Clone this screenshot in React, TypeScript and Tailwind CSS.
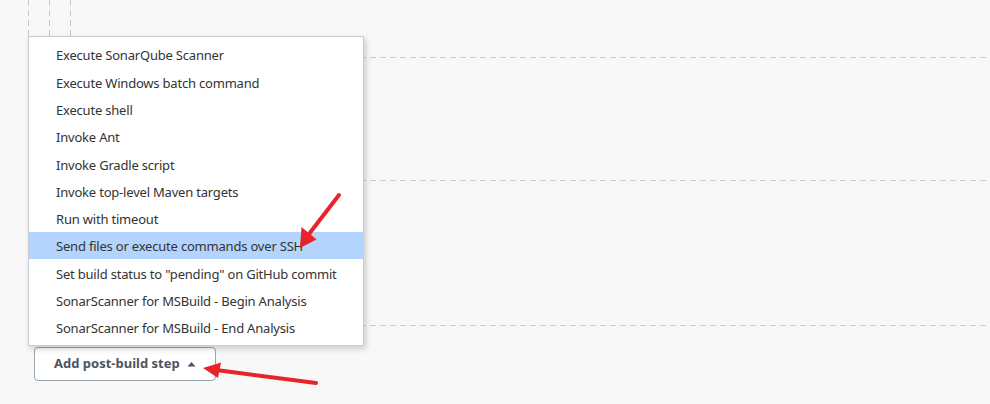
import React from "react";

const items = [
  "Execute SonarQube Scanner",
  "Execute Windows batch command",
  "Execute shell",
  "Invoke Ant",
  "Invoke Gradle script",
  "Invoke top-level Maven targets",
  "Run with timeout",
  "Send files or execute commands over SSH",
  'Set build status to "pending" on GitHub commit',
  "SonarScanner for MSBuild - Begin Analysis",
  "SonarScanner for MSBuild - End Analysis",
];

function VDash({ className = "" }: { className?: string }) {
  return (
    <div
      className={
        "w-px bg-[repeating-linear-gradient(180deg,#c2c8ce_0_6px,transparent_6px_10px)] " +
        className
      }
    />
  );
}

function HDash() {
  return (
    <div className="h-px w-full bg-[repeating-linear-gradient(90deg,#c6ccd2_0_6px,transparent_6px_10px)]" />
  );
}

export default function App() {
  return (
    <div
      className="relative w-[990px] h-[404px] overflow-hidden bg-[#f8f8f8]"
      style={{ fontFamily: '"Noto Sans", "Open Sans", sans-serif' }}
    >
      {/* background page structure */}
      <div className="flex flex-col">
        <div className="flex h-[57px] pl-[28px] gap-[20px]">
          <VDash className="h-[40px]" />
          <VDash className="h-[40px]" />
          <VDash className="h-[40px]" />
        </div>
        <div className="pl-[300px]">
          <HDash />
        </div>
        <div className="h-[122px]" />
        <div className="pl-[300px]">
          <HDash />
        </div>
        <div className="h-[144px]" />
        <div className="pl-[300px]">
          <HDash />
        </div>
        <div className="pt-[21px] pl-[34px]">
          <button className="flex items-center gap-[7px] h-[34px] w-[182px] pl-[19px] rounded-[4px] border-[1.5px] border-[#9aa5ad] bg-white text-[13px] font-bold text-[#4d545d]">
            <span>Add post-build step</span>
            <svg width="9" height="6" viewBox="0 0 9 6" className="mt-[-1px]">
              <path d="M0.5 5.5 L4.5 1 L8.5 5.5 Z" fill="#4d545d" />
            </svg>
          </button>
        </div>
      </div>

      {/* dropdown menu */}
      <div className="absolute left-[28px] top-[36px] w-[336px] border border-[#c9cdd1] bg-white py-[4px] shadow-[2px_3px_6px_rgba(0,0,0,0.18)]">
        {items.map((t, i) => (
          <div
            key={t}
            className={
              "flex h-[27.3px] items-center pl-[27px] pt-[3px] text-[13px] tracking-[-0.2px] text-[#333] " +
              (i === 7 ? "bg-[#b3d4fd]" : "")
            }
          >
            {t}
          </div>
        ))}
      </div>

      {/* annotation arrows */}
      <svg
        className="pointer-events-none absolute left-0 top-0"
        width="990"
        height="404"
        viewBox="0 0 990 404"
      >
        <line x1="339" y1="195" x2="309" y2="234" stroke="#e8232a" strokeWidth="4" strokeLinecap="round" />
        <polygon points="300,248 301.5,227 316.5,239.5" fill="#e8232a" />
        <line x1="316" y1="383" x2="220" y2="370.5" stroke="#e8232a" strokeWidth="4" strokeLinecap="round" />
        <polygon points="203,368 221,362.5 218,378" fill="#e8232a" />
      </svg>
    </div>
  );
}
